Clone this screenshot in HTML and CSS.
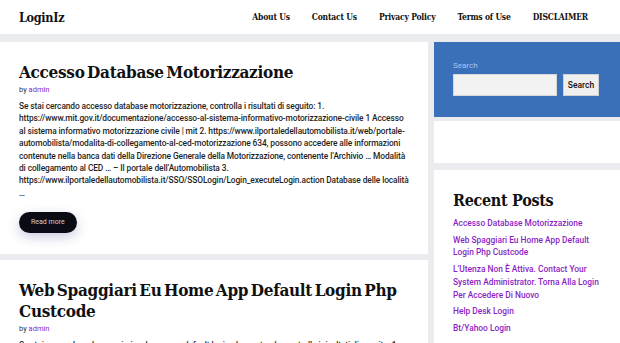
FILE: index.html
```html
<!DOCTYPE html>
<html lang="it">
<head>
<meta charset="utf-8">
<title>LoginIz</title>
<link rel="stylesheet" href="styles.css">
</head>
<body>
<header class="site-header">
  <a class="logo" href="#">LoginIz</a>
  <nav class="nav">
    <a href="#">About Us</a>
    <a href="#">Contact Us</a>
    <a href="#">Privacy Policy</a>
    <a href="#">Terms of Use</a>
    <a href="#">DISCLAIMER</a>
  </nav>
</header>
<div class="layout">
  <main class="posts">
    <article class="post">
      <h2 class="post-title">Accesso Database Motorizzazione</h2>
      <div class="meta">by <a href="#">admin</a></div>
      <p class="excerpt">Se stai cercando accesso database motorizzazione, controlla i risultati di seguito: 1. https://www.mit.gov.it/documentazione/accesso-al-sistema-informativo-motorizzazione-civile 1 Accesso al sistema informativo motorizzazione civile | mit 2. https://www.ilportaledellautomobilista.it/web/portale-automobilista/modalita-di-collegamento-al-ced-motorizzazione 634, possono accedere alle informazioni contenute nella banca dati della Direzione Generale della Motorizzazione, contenente l’Archivio … Modalità di collegamento al CED … – Il portale dell’Automobilista 3. https://www.ilportaledellautomobilista.it/SSO/SSOLogin/Login_executeLogin.action Database delle località …</p>
      <a class="read-more" href="#">Read more</a>
    </article>
    <article class="post">
      <h2 class="post-title">Web Spaggiari Eu Home App Default Login Php Custcode</h2>
      <div class="meta">by <a href="#">admin</a></div>
      <p class="excerpt">Se stai cercando web spaggiari eu home app default login php custcode, controlla i risultati di seguito: 1.</p>
    </article>
  </main>
  <aside class="sidebar">
    <section class="widget widget-search">
      <label class="search-label" for="s">Search</label>
      <div class="search-row">
        <input id="s" class="search-input" type="text">
        <button class="search-btn" type="button">Search</button>
      </div>
    </section>
    <section class="widget widget-empty"></section>
    <section class="widget widget-recent">
      <h3 class="widget-title">Recent Posts</h3>
      <ul class="recent-list">
        <li><a href="#">Accesso Database Motorizzazione</a></li>
        <li><a href="#">Web Spaggiari Eu Home App Default Login Php Custcode</a></li>
        <li><a href="#">L’Utenza Non È Attiva. Contact Your System Administrator. Torna Alla Login Per Accedere Di Nuovo</a></li>
        <li><a href="#">Help Desk Login</a></li>
        <li><a href="#">Bt/Yahoo Login</a></li>
      </ul>
    </section>
  </aside>
</div>
</body>
</html>
```
FILE: styles.css
```css
* { box-sizing: border-box; }
html, body { margin: 0; padding: 0; }
body {
  background: #e9ebee;
  font-family: Roboto, "Noto Sans", sans-serif;
  color: #1f1f1f;
  overflow: hidden;
  height: 343px;
}
a { text-decoration: none; color: inherit; }

.site-header {
  background: #fff;
  height: 34px;
  display: flex;
  align-items: center;
  justify-content: space-between;
  padding: 0 32px 0 19px;
}
.logo {
  font-family: "DejaVu Serif", serif;
  font-stretch: condensed;
  font-weight: 700;
  font-size: 12.5px;
  letter-spacing: -0.3px;
  color: #111;
}
.nav {
  display: flex;
  gap: 22px;
}
.nav a {
  font-family: "DejaVu Serif", serif;
  font-stretch: condensed;
  font-weight: 700;
  font-size: 8.5px;
  letter-spacing: -0.2px;
  color: #111;
}

.layout {
  display: grid;
  grid-template-columns: 428px 186px;
  gap: 6px;
  padding-top: 8px;
}
.posts {
  display: flex;
  flex-direction: column;
  gap: 6px;
}
.post {
  background: #fff;
  padding: 20px 12px 21px 19px;
}
.post-title {
  font-family: "DejaVu Serif", serif;
  font-stretch: condensed;
  font-weight: 700;
  font-size: 17px;
  line-height: 21px;
  letter-spacing: -0.3px;
  word-spacing: -2.5px;
  margin: 0 0 2px 0;
  color: #111;
}
.meta {
  font-size: 7.5px;
  color: #333;
  margin-bottom: 6px;
}
.meta a { color: #8a1fc4; }
.excerpt {
  font-size: 8.4px;
  line-height: 12.4px;
  letter-spacing: -0.1px;
  font-weight: 500;
  margin: 0 7px 10px 0;
  color: #1f1f1f;
}
.read-more {
  display: inline-block;
  background: #0b0b16;
  color: #cfd0d6;
  font-size: 7px;
  line-height: 9px;
  padding: 6px 12px;
  border-radius: 11px;
  box-shadow: 0 4px 12px rgba(40, 50, 140, 0.25);
}

.sidebar {
  display: flex;
  flex-direction: column;
  gap: 4px;
}
.widget { background: #fff; }
.widget-search {
  background: #3a6fba;
  padding: 19px 19px 21px 19px;
  height: 75px;
}
.search-label {
  display: block;
  color: #a9c4ec;
  font-size: 8px;
  line-height: 10px;
  margin-bottom: 3px;
}
.search-row {
  display: flex;
  gap: 6px;
}
.search-input {
  width: 104px;
  height: 22px;
  border: 1px solid #d8d8d8;
  background: #f2f2f2;
  padding: 0;
  margin: 0;
}
.search-btn {
  height: 22px;
  width: 36px;
  padding: 0;
  border: 1px solid #d0d0d0;
  background: #efefef;
  font-family: Roboto, sans-serif;
  font-size: 8.5px;
  font-weight: 500;
  color: #111;
}
.widget-empty {
  height: 42px;
  margin-bottom: 3px;
}
.widget-recent {
  padding: 21px 19px 10px 19px;
  flex: 1;
}
.widget-title {
  font-family: "DejaVu Serif", serif;
  font-stretch: condensed;
  font-weight: 700;
  font-size: 16px;
  line-height: 20px;
  letter-spacing: -0.3px;
  margin: 0 0 6px 0;
  color: #111;
}
.recent-list {
  list-style: none;
  margin: 0;
  padding: 0;
  display: flex;
  flex-direction: column;
  gap: 4px;
}
.recent-list a {
  color: #8a1fc4;
  font-size: 8.4px;
  line-height: 12.7px;
  font-weight: 500;
  display: block;
}
```
